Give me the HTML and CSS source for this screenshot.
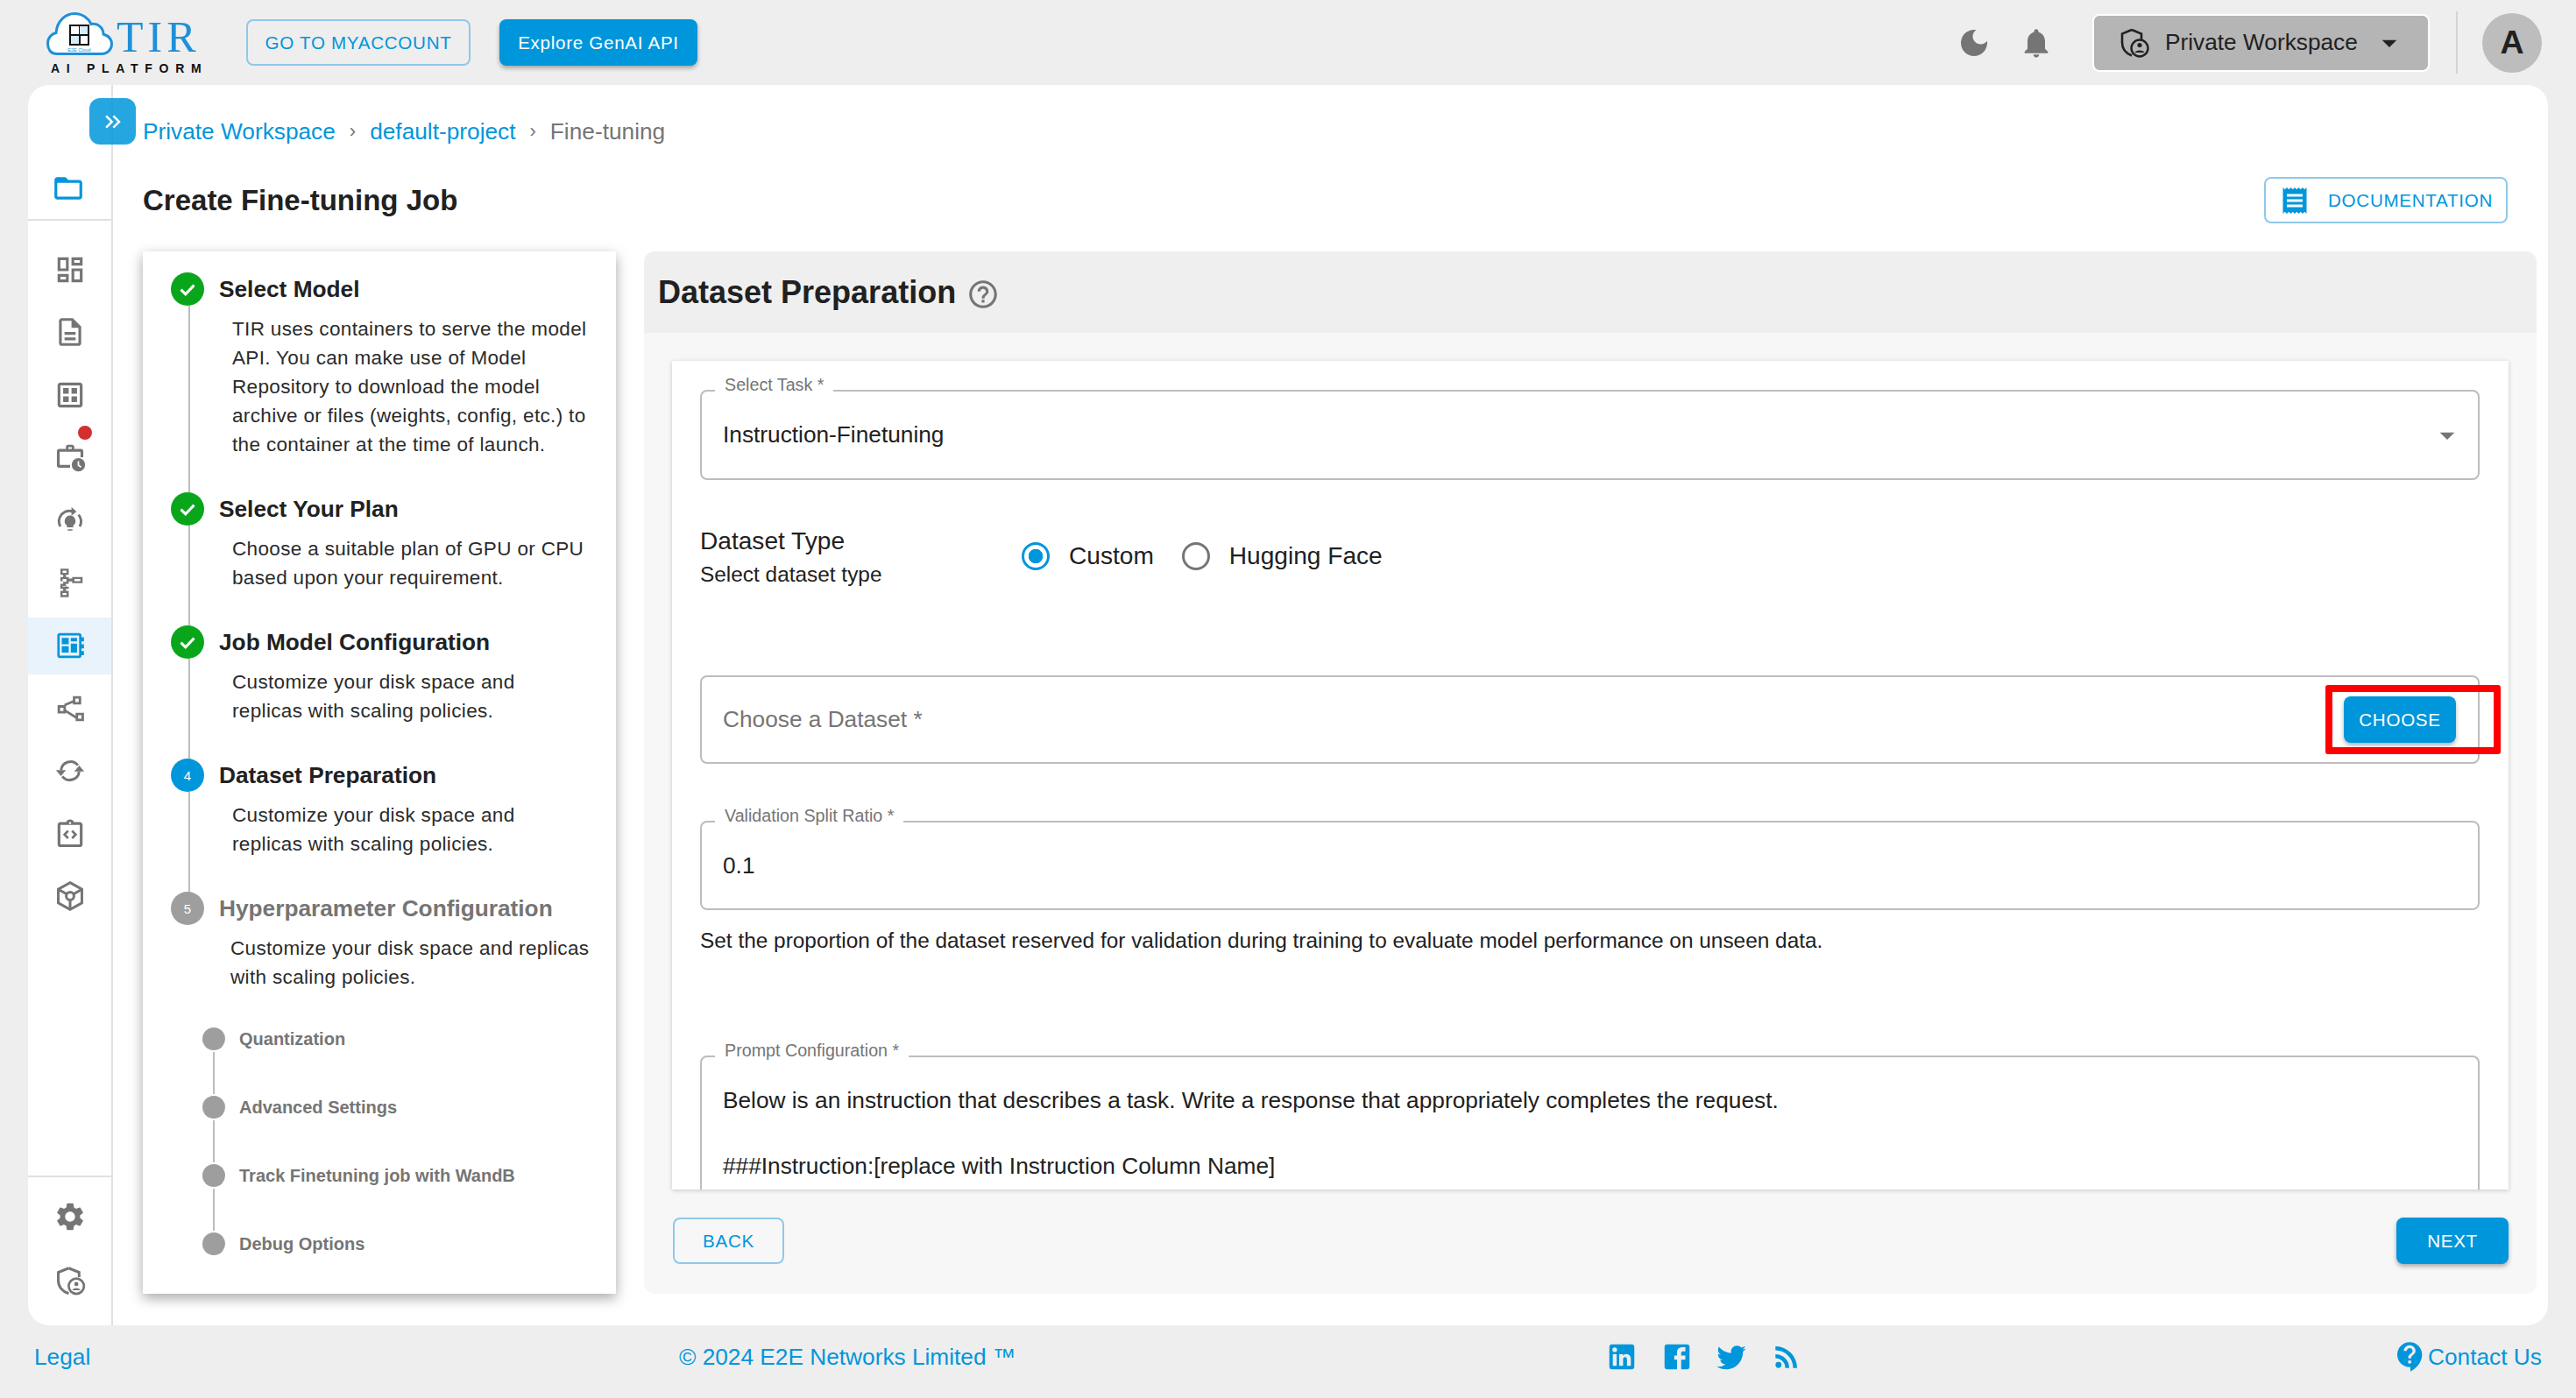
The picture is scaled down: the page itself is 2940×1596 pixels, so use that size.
FILE: index.html
```html
<!DOCTYPE html>
<html lang="en">
<head>
    <meta charset="UTF-8">
    <meta name="viewport" content="width=device-width, initial-scale=1.0">
    <title>Create Fine-tuning Job - TIR AI Platform</title>
    <link rel="stylesheet" href="styles.css">
</head>
<body>
    <header class="topbar">
        <div class="logo">
            <div class="logo-top">
                <svg class="logo-cloud" viewBox="0 0 76 50">
                    <path d="M12 47.5C4 47.5 1.5 41 1.5 35.500C1.500 29 6 24.500 11 23.500C12 10 22 1.500 32 1.500C41 1.500 48 7 51 13.500C59 12 65 18 65 25C71 27 74.500 31 74.500 36C74.500 42 70 47.500 63 47.500Z" fill="#fff" stroke="#1f90d8" stroke-width="3"/>
                    <path d="M27 15h21v22H27z" fill="none" stroke="#111" stroke-width="2"/>
                    <path d="M38 15v11H27M38 26h10v11H38z" fill="none" stroke="#111" stroke-width="2"/>
                    <path d="M38 16h9v9h-9zM28 27h9v9h-9z" fill="#d7ecf9"/>
                    <text x="37.500" y="45" class="logo-small">E2E Cloud</text>
                </svg>
                <span class="logo-tir">TIR</span>
            </div>
            <div class="logo-sub">AI PLATFORM</div>
        </div>
        <a class="btn btn-outline btn-account">GO TO MYACCOUNT</a>
        <a class="btn btn-solid btn-genai">Explore GenAI API</a>

        <div class="topbar-right">
            <svg class="ico-40 ico-grey" viewBox="0 0 24 24"><path d="M12 3c-5 0-9 4-9 9s4 9 9 9 9-4 9-9c0-.46-.04-.92-.1-1.360-.98 1.370-2.580 2.260-4.400 2.260-2.980 0-5.400-2.420-5.400-5.400 0-1.810.89-3.420 2.260-4.400-.44-.06-.9-.1-1.360-.1z"/></svg>
            <svg class="ico-40 ico-grey ico-bell" viewBox="0 0 24 24"><path d="M12 22c1.100 0 2-.9 2-2h-4c0 1.100.89 2 2 2zm6-6v-5c0-3.070-1.640-5.640-4.500-6.320V4c0-.83-.67-1.500-1.500-1.500s-1.500.67-1.500 1.500v.68C7.630 5.360 6 7.920 6 11v5l-2 2v1h16v-1l-2-2z"/></svg>
            <div class="workspace">
                <svg class="ws-shield" viewBox="0 0 34 34">
                    <path d="M14 2 3 6.500v10c0 7 4.500 12.500 11 15" fill="none" stroke="#212121" stroke-width="2.600"/>
                    <path d="M14 2l11 4.500V13" fill="none" stroke="#212121" stroke-width="2.600"/>
                    <circle cx="23" cy="23" r="9.500" fill="none" stroke="#212121" stroke-width="2.400"/>
                    <circle cx="23" cy="19.500" r="2.600" fill="#212121"/>
                    <path d="M17.500 28c.8-3.500 10.200-3.500 11 0z" fill="#212121"/>
                </svg>
                <span>Private Workspace</span>
                <svg class="ico-40 ws-caret" viewBox="0 0 24 24"><path d="M7 10l5 5 5-5z"/></svg>
            </div>
            <div class="topbar-divider"></div>
            <div class="avatar">A</div>
        </div>
    </header>

    <div class="main-card">
        <a class="expand-btn">
            <svg class="ico-30" viewBox="0 0 24 24"><path d="M6.410 6 5 7.410 9.580 12 5 16.590 6.410 18l6-6z"/><path d="M13 6l-1.410 1.410L16.170 12l-4.580 4.590L13 18l6-6z"/></svg>
        </a>

        <aside class="sidebar">
            <div class="side-top">
                <svg class="ico-38 ico-blue" viewBox="0 0 24 24"><path d="M20 6h-8l-2-2H4c-1.100 0-1.990.9-1.990 2L2 18c0 1.100.9 2 2 2h16c1.100 0 2-.9 2-2V8c0-1.100-.9-2-2-2zm0 12H4V8h16v10z"/></svg>
            </div>
            <nav class="side-nav">
                <a class="side-item"><svg class="ico-38" viewBox="0 0 24 24"><path d="M19 5v2h-4V5h4M9 5v6H5V5h4m10 8v6h-4v-6h4M9 17v2H5v-2h4M21 3h-8v6h8V3zM11 3H3v10h8V3zm10 8h-8v10h8V11zm-10 4H3v6h8v-6z"/></svg></a>
                <a class="side-item"><svg class="ico-38" viewBox="0 0 24 24"><path d="M8 16h8v2H8zm0-4h8v2H8zm6-10H6c-1.100 0-2 .9-2 2v16c0 1.100.89 2 1.990 2H18c1.100 0 2-.9 2-2V8l-6-6zm4 18H6V4h7v5h5v11z"/></svg></a>
                <a class="side-item"><svg class="ico-38" viewBox="0 0 24 24"><path d="M19 3H5c-1.100 0-2 .9-2 2v14c0 1.100.9 2 2 2h14c1.100 0 2-.9 2-2V5c0-1.100-.9-2-2-2zm0 16H5V5h14v14zM7 7h4v4H7zm6 0h4v4h-4zM7 13h4v4H7zm6 0h4v4h-4z"/></svg></a>
                <a class="side-item">
                    <svg class="ico-38" viewBox="0 0 24 24"><path d="M9 6V4.500C9 3.700 9.700 3 10.500 3h3c.8 0 1.500.7 1.500 1.500V6h5c.8 0 1.500.7 1.500 1.500V12h-2V8H4.500v9.500H12v2H4c-.8 0-1.500-.7-1.500-1.500V7.500C2.500 6.700 3.200 6 4 6zm1.800 0h2.400V4.800h-2.400z"/><circle cx="18" cy="17.500" r="4.800"/><path d="M18 14.800v2.900l1.900 1.500" fill="none" stroke="#fff" stroke-width="1.100"/></svg>
                    <span class="side-badge"></span>
                </a>
                <a class="side-item"><svg class="ico-38" viewBox="0 0 24 24"><path d="M5 16.500A7.800 7.800 0 0 1 5.700 7.900 8 8 0 0 1 14 5.600M18.100 8A7.800 7.800 0 0 1 19 16.500" fill="none" stroke="currentColor" stroke-width="1.800"/><path d="M13 2.500l3.600 3.200-3.600 3z"/><path d="M12 8.600a4 4 0 0 1 2.300 7.200v1.300H9.700v-1.300A4 4 0 0 1 12 8.600zM10.300 18.400h3.400v1h-3.400z"/></svg></a>
                <a class="side-item"><svg class="ico-38" viewBox="0 0 24 24"><path fill-rule="evenodd" d="M5 2h6v4.500H9V8h2v1.200h2.500V8H21v4.500h-7.500v-1.300H11V13H9v2h2v1.500H9V18h2v4.500H5V18h2v-1.500H5V13h2v-2H5V8h2V6.500H5zm1.600 1.500v1.500h2.800V3.500zm0 6v2h2.800v-2zm8.500 0v1.500h4.300V9.500zM6.600 14.500v.5h2.800v-.5zm0 5v1.500h2.800v-1.500z"/></svg></a>
                <a class="side-item side-item-active"><svg class="ico-38" viewBox="0 0 24 24"><path d="M4.500 3h14c1 0 1.700.7 1.700 1.700V6H22v3h-1.800v2H22v3h-1.800v2H22v3h-1.800v.3c0 1-.7 1.700-1.700 1.700h-14c-1 0-1.700-.7-1.700-1.700V4.700C2.800 3.700 3.500 3 4.500 3zm0 1.700v14.600h14V4.700z"/><path d="M6 6.500h5V11H6zM12.500 6.500h4.500V9h-4.500zM6 12.500h5V17H6zM12.500 10.500h4.500V17h-4.500z"/></svg></a>
                <a class="side-item"><svg class="ico-38" viewBox="0 0 24 24"><path fill-rule="evenodd" d="M14 3h6v6h-6zm1.800 1.800v2.400h2.400V4.800zM3 9.500h6v6H3zm1.800 1.800v2.400h2.400v-2.400zM16 15h6v6h-6zm1.800 1.800v2.400h2.400v-2.400z"/><path d="M8 9.500l7-3M8.500 13.500l8 5" transform="translate(0 0)" fill="none" stroke="currentColor" stroke-width="1.800"/></svg></a>
                <a class="side-item"><svg class="ico-38" viewBox="0 0 24 24"><path d="M5.500 11.500A6.800 6.800 0 0 1 17.600 8M18.500 12.500A6.800 6.800 0 0 1 6.400 16" fill="none" stroke="currentColor" stroke-width="1.900"/><path d="M1.800 11.500h7.200l-3.600 4.300zM15 12.500h7.200l-3.600-4.300z"/></svg></a>
                <a class="side-item"><svg class="ico-38" viewBox="0 0 24 24"><path d="M19 3.500h-4.200C14.400 2.300 13.300 1.500 12 1.500s-2.400.8-2.800 2H5c-1.100 0-2 .9-2 2v14c0 1.100.9 2 2 2h14c1.100 0 2-.9 2-2v-14c0-1.100-.9-2-2-2zm-7 0c.4 0 .8.3.8.8s-.4.7-.8.7-.8-.3-.8-.7.4-.8.8-.8zm7 16H5v-14h14z"/><path d="M10 9.200 6.800 12.500l3.200 3.300 1.200-1.200-2-2.100 2-2.100zM14 9.200l-1.200 1.200 2 2.100-2 2.100 1.200 1.200 3.200-3.300z"/></svg></a>
                <a class="side-item"><svg class="ico-38" viewBox="0 0 24 24"><path d="M12 2.300 20.500 7v10L12 21.700 3.500 17V7z" fill="none" stroke="currentColor" stroke-width="1.900"/><circle cx="12" cy="12" r="2.800" fill="none" stroke="currentColor" stroke-width="1.900"/><path d="M4 7.400l5.600 3.200M20 7.400l-5.600 3.200M12 14.800v6.400" fill="none" stroke="currentColor" stroke-width="1.900"/></svg></a>
            </nav>
            <div class="side-bottom">
                <a class="side-item"><svg class="ico-38" viewBox="0 0 24 24"><path d="M19.140 12.940c.04-.3.06-.61.06-.94 0-.32-.02-.64-.07-.94l2.030-1.580c.18-.14.23-.41.12-.61l-1.920-3.320c-.12-.22-.37-.29-.59-.22l-2.390.96c-.5-.38-1.030-.7-1.620-.94l-.36-2.540c-.04-.24-.24-.41-.48-.41h-3.840c-.24 0-.43.17-.47.41l-.36 2.540c-.59.24-1.130.57-1.620.94l-2.390-.96c-.22-.08-.47 0-.59.22L2.740 8.870c-.12.21-.08.47.12.61l2.030 1.580c-.05.3-.09.63-.09.94s.02.64.07.94l-2.030 1.580c-.18.14-.23.41-.12.61l1.920 3.320c.12.22.37.29.59.22l2.390-.96c.5.38 1.030.7 1.620.94l.36 2.540c.05.24.24.41.48.41h3.840c.24 0 .44-.17.47-.41l.36-2.540c.59-.24 1.130-.56 1.620-.94l2.390.96c.22.08.47 0 .59-.22l1.920-3.320c.12-.22.07-.47-.12-.61l-2.010-1.580zM12 15.600c-1.980 0-3.600-1.620-3.600-3.600s1.620-3.600 3.600-3.600 3.600 1.620 3.600 3.600-1.620 3.600-3.600 3.600z"/></svg></a>
                <a class="side-item"><svg class="ico-38" viewBox="0 0 24 24"><path d="M11 3 3.500 6v6c0 4.300 2.900 7.800 7.500 9.300" fill="none" stroke="currentColor" stroke-width="1.900"/><path d="M11 3l7.500 3v3.500" fill="none" stroke="currentColor" stroke-width="1.900"/><circle cx="16.500" cy="16" r="5.500" fill="#fff" stroke="currentColor" stroke-width="1.700"/><circle cx="16.500" cy="14.500" r="1.500"/><path d="M13.500 19c.5-2.200 5.500-2.200 6 0z"/></svg></a>
            </div>
        </aside>

        <main class="content">
            <div class="breadcrumb">
                <a>Private Workspace</a><span class="crumb-sep">›</span><a>default-project</a><span class="crumb-sep">›</span><span class="crumb-now">Fine-tuning</span>
            </div>
            <div class="page-head">
                <h1>Create Fine-tuning Job</h1>
                <a class="btn btn-outline btn-doc">
                    <svg class="ico-36" viewBox="0 0 24 24"><path d="M18 17H6v-2h12v2zm0-4H6v-2h12v2zm0-4H6V7h12v2zM3 22l1.500-1.500L6 22l1.500-1.500L9 22l1.500-1.500L12 22l1.500-1.500L15 22l1.500-1.500L18 22l1.500-1.500L21 22V2l-1.500 1.500L18 2l-1.500 1.500L15 2l-1.500 1.500L12 2l-1.500 1.500L9 2 7.500 3.500 6 2 4.500 3.500 3 2v20z"/></svg>
                    DOCUMENTATION
                </a>
            </div>

            <div class="columns">
                <section class="stepper">
                    <div class="step">
                        <div class="step-head">
                            <span class="step-dot dot-done"><svg viewBox="0 0 24 24"><path d="M6 12.500l4.200 4.200L18 8.500" fill="none" stroke="#fff" stroke-width="2.400"/></svg></span>
                            <span class="step-title">Select Model</span>
                        </div>
                        <p class="step-body">TIR uses containers to serve the model API. You can make use of Model Repository to download the model archive or files (weights, config, etc.) to the container at the time of launch.</p>
                    </div>
                    <div class="step">
                        <div class="step-head">
                            <span class="step-dot dot-done"><svg viewBox="0 0 24 24"><path d="M6 12.500l4.200 4.200L18 8.500" fill="none" stroke="#fff" stroke-width="2.400"/></svg></span>
                            <span class="step-title">Select Your Plan</span>
                        </div>
                        <p class="step-body">Choose a suitable plan of GPU or CPU based upon your requirement.</p>
                    </div>
                    <div class="step">
                        <div class="step-head">
                            <span class="step-dot dot-done"><svg viewBox="0 0 24 24"><path d="M6 12.500l4.200 4.200L18 8.500" fill="none" stroke="#fff" stroke-width="2.400"/></svg></span>
                            <span class="step-title">Job Model Configuration</span>
                        </div>
                        <p class="step-body">Customize your disk space and replicas with scaling policies.</p>
                    </div>
                    <div class="step">
                        <div class="step-head">
                            <span class="step-dot dot-active">4</span>
                            <span class="step-title">Dataset Preparation</span>
                        </div>
                        <p class="step-body">Customize your disk space and replicas with scaling policies.</p>
                    </div>
                    <div class="step step-last">
                        <div class="step-head">
                            <span class="step-dot dot-todo">5</span>
                            <span class="step-title title-todo">Hyperparameter Configuration</span>
                        </div>
                        <p class="step-body">Customize your disk space and replicas with scaling policies.</p>
                    </div>
                    <div class="substeps">
                        <div class="sub"><span class="sub-dot"></span><span class="sub-label">Quantization</span></div>
                        <div class="sub-line"></div>
                        <div class="sub"><span class="sub-dot"></span><span class="sub-label">Advanced Settings</span></div>
                        <div class="sub-line"></div>
                        <div class="sub"><span class="sub-dot"></span><span class="sub-label">Track Finetuning job with WandB</span></div>
                        <div class="sub-line"></div>
                        <div class="sub"><span class="sub-dot"></span><span class="sub-label">Debug Options</span></div>
                    </div>
                </section>

                <section class="panel">
                    <div class="panel-head">
                        <h2>Dataset Preparation</h2>
                        <svg class="ico-38 ico-help" viewBox="0 0 24 24"><path d="M11 18h2v-2h-2v2zm1-16C6.480 2 2 6.480 2 12s4.480 10 10 10 10-4.480 10-10S17.520 2 12 2zm0 18c-4.410 0-8-3.590-8-8s3.590-8 8-8 8 3.590 8 8-3.590 8-8 8zm0-14c-2.210 0-4 1.790-4 4h2c0-1.100.9-2 2-2s2 .9 2 2c0 2-3 1.750-3 5h2c0-2.250 3-2.500 3-5 0-2.210-1.790-4-4-4z"/></svg>
                    </div>
                    <div class="panel-body">
                        <div class="form-card">
                            <div class="field field-select">
                                <label class="field-label">Select Task *</label>
                                <span class="field-value">Instruction-Finetuning</span>
                                <svg class="ico-40 ico-grey" viewBox="0 0 24 24"><path d="M7 10l5 5 5-5z"/></svg>
                            </div>

                            <div class="type-row">
                                <div class="type-text">
                                    <div class="type-title">Dataset Type</div>
                                    <div class="type-sub">Select dataset type</div>
                                </div>
                                <div class="radios">
                                    <span class="radio radio-on"></span><span class="radio-label">Custom</span>
                                    <span class="radio radio-off"></span><span class="radio-label">Hugging Face</span>
                                </div>
                            </div>

                            <div class="field field-choose">
                                <span class="field-ph">Choose a Dataset *</span>
                                <a class="btn btn-solid btn-small">CHOOSE</a>
                                <div class="red-box"></div>
                            </div>

                            <div class="field field-split">
                                <label class="field-label">Validation Split Ratio *</label>
                                <span class="field-value">0.1</span>
                            </div>
                            <p class="helper">Set the proportion of the dataset reserved for validation during training to evaluate model performance on unseen data.</p>

                            <div class="field field-prompt">
                                <label class="field-label">Prompt Configuration *</label>
                                <p>Below is an instruction that describes a task. Write a response that appropriately completes the request.</p>
                                <p>&nbsp;</p>
                                <p>###Instruction:[replace with Instruction Column Name]</p>
                                <p>&nbsp;</p>
                                <p>###Input:[replace with Input Column Name]</p>
                            </div>
                        </div>
                        <div class="panel-actions">
                            <a class="btn btn-outline btn-back">BACK</a>
                            <a class="btn btn-solid btn-next">NEXT</a>
                        </div>
                    </div>
                </section>
            </div>
        </main>
    </div>

    <footer class="footer">
        <a>Legal</a>
        <span>© 2024 E2E Networks Limited ™</span>
        <div class="socials">
            <svg class="ico-38" viewBox="0 0 24 24"><path d="M19 3a2 2 0 0 1 2 2v14a2 2 0 0 1-2 2H5a2 2 0 0 1-2-2V5a2 2 0 0 1 2-2h14m-.5 15.500v-5.300a3.260 3.260 0 0 0-3.260-3.260c-.85 0-1.840.52-2.320 1.300v-1.110h-2.790v8.370h2.790v-4.930c0-.77.62-1.400 1.390-1.400a1.400 1.400 0 0 1 1.400 1.400v4.930h2.790M6.880 8.560a1.680 1.680 0 0 0 1.680-1.680c0-.93-.75-1.690-1.680-1.690a1.690 1.690 0 0 0-1.690 1.690c0 .93.76 1.680 1.690 1.680m1.390 9.940v-8.370H5.500v8.370h2.770z"/></svg>
            <svg class="ico-38" viewBox="0 0 24 24"><path d="M5 3h14a2 2 0 0 1 2 2v14a2 2 0 0 1-2 2H5a2 2 0 0 1-2-2V5a2 2 0 0 1 2-2m13 2h-2.500A3.500 3.500 0 0 0 12 8.500V11h-2v3h2v7h3v-7h3v-3h-3V9a1 1 0 0 1 1-1h2V5z"/></svg>
            <svg class="ico-38" viewBox="0 0 24 24"><path d="M22.460 6c-.77.35-1.600.58-2.460.69.88-.53 1.560-1.370 1.880-2.380-.83.5-1.750.85-2.720 1.050C18.370 4.500 17.260 4 16 4c-2.350 0-4.270 1.920-4.270 4.290 0 .34.04.67.11.98C8.280 9.090 5.110 7.380 3 4.790c-.37.63-.58 1.370-.58 2.150 0 1.490.75 2.810 1.910 3.560-.71 0-1.370-.2-1.950-.5v.03c0 2.080 1.480 3.820 3.440 4.210a4.220 4.220 0 0 1-1.930.07 4.280 4.280 0 0 0 4 2.980 8.521 8.521 0 0 1-5.330 1.840c-.34 0-.68-.02-1.020-.06C3.440 20.290 5.700 21 8.120 21 16 21 20.330 14.460 20.330 8.790c0-.19 0-.37-.01-.56.84-.6 1.560-1.360 2.140-2.230z"/></svg>
            <svg class="ico-38" viewBox="0 0 24 24"><path d="M6.180 15.640a2.180 2.180 0 0 1 2.180 2.180C8.360 19 7.380 20 6.180 20 5 20 4 19 4 17.820a2.180 2.180 0 0 1 2.180-2.180M4 4.440A15.560 15.560 0 0 1 19.560 20h-2.830A12.730 12.730 0 0 0 4 7.270V4.440m0 5.660a9.900 9.900 0 0 1 9.900 9.900h-2.830A7.070 7.070 0 0 0 4 12.930V10.100z"/></svg>
        </div>
        <a class="contact">
            <svg class="ico-40" viewBox="0 0 24 24"><path d="M11.500 2C6.810 2 3 5.810 3 10.500S6.810 19 11.500 19h.5v3c4.860-2.340 8-7 8-11.500C20 5.810 16.190 2 11.500 2zm1 14.500h-2v-2h2v2zm0-3.500h-2c0-3.250 3-3 3-5 0-1.100-.9-2-2-2s-2 .9-2 2h-2c0-2.210 1.790-4 4-4s4 1.790 4 4c0 2.500-3 2.750-3 5z"/></svg>
            Contact Us
        </a>
    </footer>
</body>
</html>
```

FILE: styles.css
```css
/* ========= BASE ========= */
:root{
    --primary:#0096db;
    --primary-line:#90c8ea;
    --text:#212121;
    --grey:#757575;
    --line:#bdbdbd;
}
*{margin:0;padding:0;box-sizing:border-box;}
html,body{height:100%;}
body{
    width:2940px;height:1596px;overflow:hidden;
    background:#eeeeee;color:var(--text);
    font-family:"Liberation Sans",Arial,sans-serif;font-size:26.25px;
    display:flex;flex-direction:column;
}
a{cursor:pointer;}

/* ========= ICONS ========= */
svg{display:block;flex-shrink:0;fill:currentColor;}
.ico-30{width:30px;height:30px;}
.ico-36{width:36px;height:36px;}
.ico-38{width:38px;height:38px;}
.ico-40{width:40px;height:40px;}
.ico-grey{color:var(--grey);}
.ico-blue{color:var(--primary);}

/* ========= BUTTONS ========= */
.btn{
    display:inline-flex;align-items:center;justify-content:center;
    height:53px;border-radius:8px;
    font-size:20.6px;letter-spacing:.7px;white-space:nowrap;
}
.btn-outline{border:2px solid var(--primary-line);color:var(--primary);}
.btn-solid{background:var(--primary);color:#fff;box-shadow:0 3px 5px rgba(0,0,0,.3);}

/* ========= TOP BAR ========= */
.topbar{
    height:97px;flex-shrink:0;
    display:flex;align-items:center;
    padding:0 39px 0 53px;
}
.logo{width:175px;margin-top:1px;}
.logo-top{display:flex;align-items:flex-end;height:49px;}
.logo-cloud{width:76px;height:50px;}
.logo-small{font-size:5.500px;fill:#1f90d8;text-anchor:middle;}
.logo-tir{
    font-family:"Liberation Serif",serif;font-size:50px;line-height:44px;
    color:#1f90d8;letter-spacing:5px;margin-left:4px;
}
.logo-sub{
    margin:8px 0 0 5px;font-size:14px;line-height:12px;font-weight:700;
    letter-spacing:7.700px;white-space:nowrap;color:#111;
}
.btn-account{width:256px;margin-left:53px;}
.btn-genai{width:226px;margin-left:33px;}
.topbar-right{margin-left:auto;display:flex;align-items:center;}
.ico-bell{margin-left:31px;}
.workspace{
    width:385px;height:66px;margin-left:44px;padding-left:29px;
    display:flex;align-items:center;
    background:#b5b5b5;border:2px solid #fff;border-radius:8px;
}
.ws-shield{width:34px;height:34px;margin-right:18px;}
.ws-caret{margin-left:16px;}
.topbar-divider{width:2px;height:71px;margin-left:30px;background:#d4d4d4;}
.avatar{
    width:68px;height:68px;margin-left:28px;border-radius:50%;
    background:#bdbdbd;display:flex;align-items:center;justify-content:center;
    font-size:37.500px;font-weight:700;
}

/* ========= MAIN CARD ========= */
.main-card{
    position:relative;
    height:1416px;margin:0 32px;flex-shrink:0;
    display:flex;background:#fff;border-radius:24px;
}
.expand-btn{
    position:absolute;left:70px;top:15px;z-index:2;
    width:53px;height:53px;border-radius:12px;
    background:rgba(0,150,219,.85);color:#fff;
    display:flex;align-items:center;justify-content:center;
}

/* ========= SIDEBAR ========= */
.sidebar{
    width:97px;flex-shrink:0;
    display:flex;flex-direction:column;
    border-right:2px solid #e0e0e0;
}
.side-top{
    height:155px;flex-shrink:0;padding:99px 0 0 27px;
    border-bottom:2px solid #e0e0e0;
}
.side-nav{display:flex;flex-direction:column;gap:6.600px;padding-top:23px;}
.side-item{
    position:relative;height:65px;flex-shrink:0;
    display:flex;align-items:center;justify-content:center;
    color:var(--grey);
}
.side-item-active{background:#e9f3fb;color:var(--primary);}
.side-badge{
    position:absolute;left:57px;top:-4px;
    width:16px;height:16px;border-radius:50%;background:#d32f2f;
}
.side-bottom{
    margin-top:auto;padding:12px 0 19px;
    display:flex;flex-direction:column;gap:8px;
    border-top:2px solid #e0e0e0;
}

/* ========= CONTENT ========= */
.content{flex:1;min-width:0;padding:35px 13px 36px 34px;display:flex;flex-direction:column;}
.breadcrumb{display:flex;align-items:center;height:36px;}
.breadcrumb a{color:var(--primary);}
.crumb-sep{margin:0 16px;color:var(--grey);font-size:22px;}
.crumb-now{color:var(--grey);}
.page-head{
    display:flex;align-items:center;justify-content:space-between;
    height:53px;margin-top:34px;padding-right:33px;
}
.page-head h1{font-size:33px;font-weight:700;}
.btn-doc{width:278px;gap:20px;background:#fff;}
.columns{display:flex;gap:32px;margin-top:32px;flex:1;min-height:0;}

/* ========= STEPPER ========= */
.stepper{
    width:540px;flex-shrink:0;padding:24px 0 0 32px;
    background:#fff;box-shadow:0 5px 14px rgba(0,0,0,.35);
}
.step-head{display:flex;align-items:center;gap:17px;height:38px;}
.step-dot{
    width:38px;height:38px;border-radius:50%;flex-shrink:0;
    display:flex;align-items:center;justify-content:center;
    color:#fff;font-size:15px;
}
.step-dot svg{width:30px;height:30px;}
.dot-done{background:#09a61c;}
.dot-active{background:var(--primary);}
.dot-todo{background:#9e9e9e;}
.step-title{font-weight:700;}
.title-todo{color:var(--grey);}
.step-body{
    width:458px;margin-left:20px;padding:10px 0 38px 48px;
    border-left:2px solid var(--line);
    font-size:22.5px;letter-spacing:.34px;line-height:33px;color:#2b2b2b;
}
.step-last .step-body{border-left:0;margin-left:22px;padding-left:46px;padding-bottom:0;}
.substeps{margin:41px 0 0 36px;}
.sub{display:flex;align-items:center;gap:16px;height:26px;}
.sub-dot{width:26px;height:26px;border-radius:50%;background:#9e9e9e;flex-shrink:0;}
.sub-label{font-size:20px;font-weight:700;color:var(--grey);}
.sub-line{width:2px;height:48px;margin:2px 0 2px 12px;background:var(--line);}

/* ========= PANEL ========= */
.panel{flex:1;min-width:0;display:flex;flex-direction:column;border-radius:12px;overflow:hidden;}
.panel-head{
    height:93px;flex-shrink:0;padding-left:16px;
    display:flex;align-items:center;gap:12px;
    background:#efefef;
}
.panel-head h2{font-size:36px;font-weight:700;}
.ico-help{color:var(--grey);margin-top:4px;}
.panel-body{flex:1;min-height:0;display:flex;flex-direction:column;background:#f7f7f7;padding-top:32px;}
.form-card{
    height:946px;flex-shrink:0;margin:0 32px;padding:33px 33px 0 32px;
    background:#fff;box-shadow:0 1px 5px rgba(0,0,0,.2);overflow:hidden;
}
.panel-actions{display:flex;justify-content:space-between;padding:32px 32px 0 33px;}
.btn-back{width:127px;}
.btn-next{width:128px;}

/* ========= FORM FIELDS ========= */
.field{
    position:relative;
    display:flex;align-items:center;
    padding:0 24px;
    border:2px solid var(--line);border-radius:8px;
}
.field-label{
    position:absolute;left:15px;top:-20px;padding:0 11px;
    background:#fff;font-size:19.7px;line-height:24px;color:var(--grey);white-space:nowrap;
}
.field-select{height:103px;padding-right:15px;justify-content:space-between;}
.field-choose{height:101px;margin-top:99px;padding-right:25px;justify-content:space-between;}
.field-split{height:102px;margin-top:65px;}
.field-ph{color:var(--grey);}
.btn-small{width:128px;}
.red-box{
    position:absolute;right:-26px;top:9px;bottom:9px;width:200px;
    border:8px solid #ff0000;border-radius:3px;
}
.type-row{display:flex;margin-top:52px;height:72px;}
.type-text{width:367px;}
.type-title{font-size:28.1px;line-height:36px;}
.type-sub{font-size:24.4px;line-height:32px;margin-top:4px;}
.radios{display:flex;align-items:center;height:36px;margin-top:16.500px;font-size:28.1px;}
.radio{width:32px;height:32px;border-radius:50%;flex-shrink:0;}
.radio-on{border:3px solid var(--primary);background:radial-gradient(circle,var(--primary) 0 8px,#fff 8.500px);}
.radio-off{border:3px solid var(--grey);margin-left:32px;}
.radio-label{margin-left:22px;}
.helper{margin-top:19px;font-size:24.4px;line-height:32px;}
.field-prompt{
    display:block;height:320px;margin-top:115px;padding-top:30.500px;
}
.field-prompt p{line-height:37.500px;white-space:nowrap;}

/* ========= FOOTER ========= */
.footer{
    flex:1;padding:0 0 11px 39px;
    display:grid;grid-template-columns:736px 1057px 899px auto;align-items:center;
    color:var(--primary);
}
.socials{display:flex;gap:24.600px;}
.contact{display:flex;align-items:center;white-space:nowrap;}
```
